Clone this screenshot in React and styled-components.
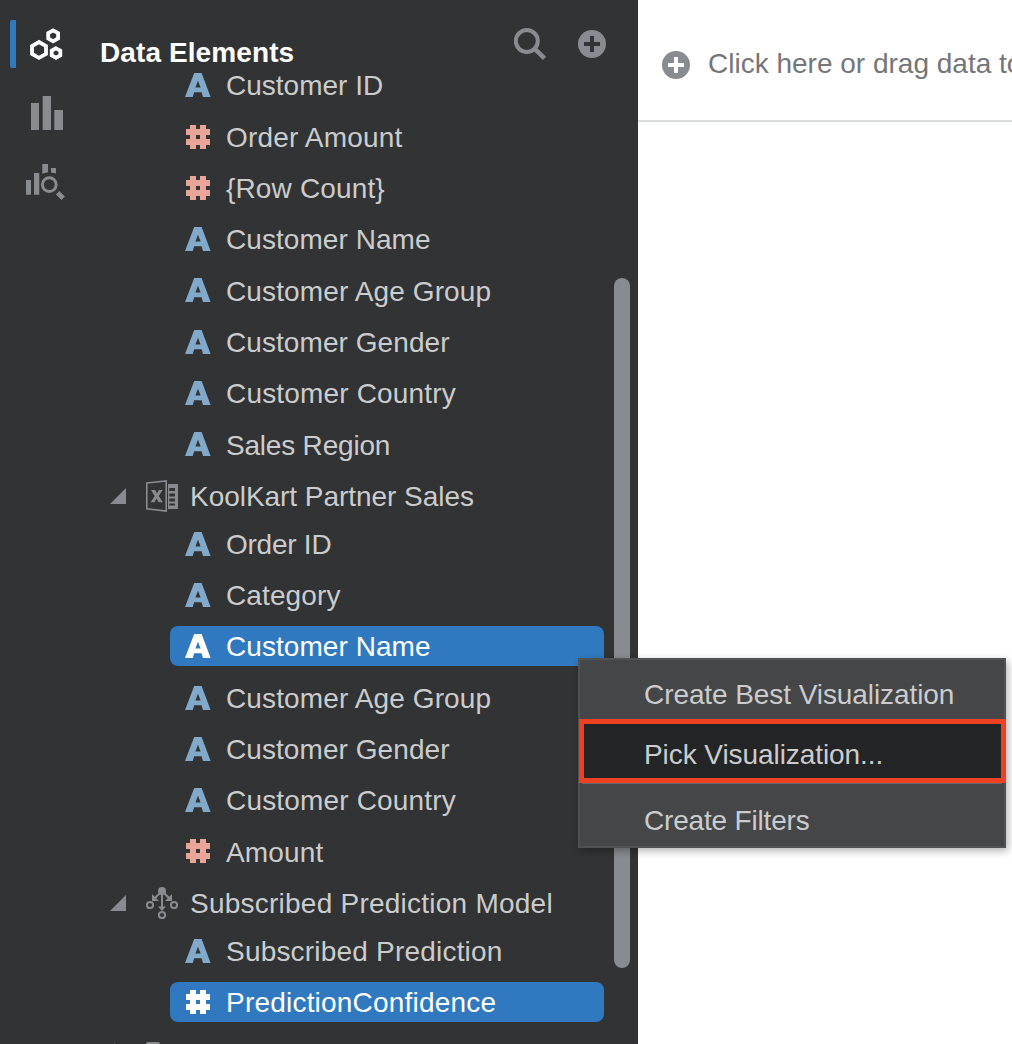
import React from 'react';
import styled, { createGlobalStyle, css } from 'styled-components';

const Global = createGlobalStyle`
  *, *::before, *::after { box-sizing: border-box; }
  html, body { margin: 0; padding: 0; overflow: hidden; }
`;

const Page = styled.div`
  display: flex;
  position: relative;
  width: 1012px;
  height: 1044px;
  overflow: hidden;
  background: #fff;
  font-family: 'Liberation Sans', Arial, sans-serif;
  font-size: 28px;
  white-space: nowrap;
`;

const Rail = styled.nav`
  display: flex;
  flex-direction: column;
  gap: 21px;
  flex: 0 0 90px;
  padding: 20px 0 0 10px;
  background: #323334;
`;

const RailButton = styled.button`
  display: flex;
  align-items: center;
  height: 48px;
  width: 80px;
  padding: 0 0 0 9px;
  border: 0;
  border-left: 6px solid ${p => (p.$active ? '#3079c0' : 'transparent')};
  border-radius: 2px 0 0 2px;
  background: none;
  color: ${p => (p.$active ? '#fff' : '#888b90')};
`;

const Panel = styled.section`
  display: flex;
  flex-direction: column;
  flex: 0 0 548px;
  background: #323334;
  overflow: hidden;
`;

const PanelHeader = styled.header`
  display: flex;
  align-items: flex-start;
  flex: none;
  height: 59.6px;
  padding: 0 32px 0 10px;
`;

const Title = styled.h1`
  flex: 1;
  margin: 37px 0 0;
  font-size: 28px;
  line-height: 32px;
  font-weight: 700;
  letter-spacing: 0.1px;
  color: #fff;
`;

const HeaderTools = styled.div`
  display: flex;
  align-items: center;
  gap: 30px;
  padding-top: 27px;
  color: #888b90;
`;

const PanelBody = styled.div`
  display: flex;
  justify-content: space-between;
  flex: 1;
  min-height: 0;
  padding-right: 8px;
`;

const Tree = styled.div`
  width: 514px;
`;

const Row = styled.div`
  display: flex;
  align-items: center;
  height: 51.3px;
  padding-left: 80px;
`;

const Item = styled.div`
  display: flex;
  align-items: center;
  gap: 15px;
  width: 434px;
  height: 40px;
  padding-left: 15px;
  border-radius: 8px;
  background: ${p => (p.$selected ? '#3079c0' : 'transparent')};
  color: ${p => (p.$selected ? '#fff' : '#cbcccd')};
`;

const GroupRow = styled.div`
  display: flex;
  align-items: center;
  height: 48px;
  padding: 3.4px 0 0 20px;
  color: #cbcccd;
`;

const GroupIcon = styled.span`
  display: flex;
  width: 32px;
  margin: 0 12px 0 20px;
`;

const Label = styled.span`
  line-height: 32px;
  letter-spacing: ${p => p.$ls || 0}px;
`;

const TreeLabel = styled(Label)`
  padding-top: ${p => (p.$low ? 4.4 : 2.4)}px;
`;

const ScrollThumb = styled.div`
  width: 16px;
  height: 690px;
  margin-top: 218.4px;
  border-radius: 8px;
  background: #888b8f;
`;

const Canvas = styled.main`
  flex: 1;
  min-width: 0;
  overflow: hidden;
`;

const DropBar = styled.div`
  display: flex;
  align-items: center;
  gap: 18px;
  height: 122px;
  padding: 10px 0 0 24px;
  border-bottom: 2px solid #d8dcdf;
  color: #757677;
`;

const DropLabel = styled(Label)`
  padding-bottom: 2px;
`;

const Menu = styled.div`
  position: absolute;
  left: 578px;
  top: 658px;
  width: 428px;
  height: 190px;
  border: 2px solid #505254;
  background: #454647;
  box-shadow: 2px 3px 8px rgba(0, 0, 0, 0.3);
  color: #cbcccd;
`;

const MenuItem = styled.div`
  display: flex;
  align-items: center;
  height: 60px;
  padding: 9px 0 0 64px;
  ${p => p.$highlighted && css`
    height: 64px;
    margin: -1px -2px 0 -1px;
    padding: 8px 0 0 60px;
    border: 5px solid #ee4023;
    background: #242527;
  `}
  ${p => p.$separated && css`
    margin: 0 2px;
    padding: 15px 0 0 62px;
    border-top: 1px solid #66686a;
  `}
`;

const IconSvg = styled.svg`
  display: block;
  flex: none;
  fill: ${p => p.$fill || 'currentColor'};
`;

const TextIcon = ({ color }) => (
  <IconSvg width="26" height="24" viewBox="0 0 26 24" $fill={color}>
    <path fillRule="evenodd" d="M9.2 0H16.6L25.6 24H18L16.6 19.3H9.2L7.7 24H0ZM13 7.8L10.4 14.4H15.6Z" />
  </IconSvg>
);

const NumberIcon = ({ color }) => (
  <IconSvg width="26" height="24" viewBox="0 0 26 24" $fill={color}>
    <path fillRule="evenodd" d="M5 0H11V4H15V0H21V4H25V10H21V14H25V20H21V24H15V20H11V24H5V20H1V14H5V10H1V4H5ZM11 10V14H15V10Z" />
  </IconSvg>
);

const PlusIcon = ({ plus }) => (
  <IconSvg width="28" height="28" viewBox="0 0 28 28" $fill="#888b90">
    <circle cx="14" cy="14" r="14" />
    <path d="M12 6H16V12H22V16H16V22H12V16H6V12H12Z" fill={plus} />
  </IconSvg>
);

const SearchIcon = () => (
  <IconSvg width="34" height="34" viewBox="0 0 34 34" $fill="none" stroke="currentColor" strokeWidth="4">
    <circle cx="12.8" cy="14" r="11" />
    <path d="M20.5 21.7L30.5 31.4" strokeWidth="4.6" />
  </IconSvg>
);

const HexGlyph = styled(IconSvg)`
  margin-left: 4px;
`;

const HexIcon = () => (
  <HexGlyph width="34" height="34" viewBox="0 0 34 34" $fill="none" stroke="currentColor" strokeWidth="3.8">
    <path d="M10 15L17 19V26.8L10 30.8L3 26.8V19Z" />
    <path d="M24.1 3.4L29.1 6.2V11.5L24.1 14.3L19.2 11.5V6.2Z" />
    <path d="M27 21.3L31.3 23.7V28.3L27 30.7L22.7 28.3V23.7Z" />
  </HexGlyph>
);

const BarsIcon = () => (
  <IconSvg width="40" height="34" viewBox="0 0 40 34">
    <path d="M6 7H14V34H6ZM17.7 0H26V34H17.7ZM29.3 14H38V34H29.3Z" />
  </IconSvg>
);

const InsightIcon = () => (
  <IconSvg width="42" height="38" viewBox="0 0 42 38">
    <path d="M1 17H6V31.7H1ZM9 10H14.3V31.7H9ZM17.3 1H23V9.3L17.3 10.7ZM26 5H31V10.6L26 9.6Z" />
    <circle cx="24.3" cy="21.6" r="6.9" fill="none" stroke="currentColor" strokeWidth="3" />
    <path d="M32.6 29.8L38.2 35.2" stroke="currentColor" strokeWidth="4.8" />
  </IconSvg>
);

const Expander = () => (
  <IconSvg width="16" height="16" viewBox="0 0 16 16" $fill="#888b90">
    <path d="M16 0V16H0Z" />
  </IconSvg>
);

const Collapsed = () => (
  <IconSvg width="16" height="21" viewBox="0 0 16 21" $fill="#888b90">
    <path d="M4 0L14 10.5L4 21Z" />
  </IconSvg>
);

const WorkbookIcon = () => (
  <IconSvg width="32" height="32" viewBox="0 0 32 32" $fill="#888b90">
    <path d="M.8 3L20.2 .9V31.1L.8 28.8Z" fill="none" stroke="#888b90" strokeWidth="1.6" />
    <path d="M5 10H9.2L11 13.5L12.8 10H16.5L12.8 16L16.7 22.3H12.5L10.6 18.6L8.5 22.3H4.7L8.7 16Z" />
    <path fillRule="evenodd" d="M22 4H32V29H22ZM23.3 8V11H29V8ZM23.3 13.5V16.5H29V13.5ZM23.3 18.5V21.5H29V18.5ZM23.3 23.5V25.5H29V23.5Z" />
  </IconSvg>
);

const ModelIcon = () => (
  <IconSvg width="32" height="32" viewBox="0 0 32 32" $fill="#888b90">
    <circle cx="16" cy="4" r="4" />
    <g fill="none" stroke="#888b90" strokeWidth="2">
      <circle cx="4" cy="18" r="3.1" />
      <circle cx="28" cy="18" r="3.1" />
      <circle cx="16" cy="28" r="3.1" />
      <path d="M14 6L9 11M18 6L23 11M16 7V22" />
    </g>
    <path d="M6 7V14H13ZM26 7V14H19ZM12 19.5H20L16 24Z" />
  </IconSvg>
);

const FolderIcon = () => (
  <IconSvg width="32" height="23" viewBox="0 0 32 23" $fill="#888b90">
    <path d="M0 2Q0 0 2 0H12Q14 0 14 2L15 4H32V23H0Z" />
  </IconSvg>
);

const groupIcons = { workbook: WorkbookIcon, model: ModelIcon, folder: FolderIcon };

const tree = [
  { type: 'text', label: 'Customer ID' },
  { type: 'number', label: 'Order Amount', ls: 0.17 },
  { type: 'number', label: '{Row Count}', ls: 0.15 },
  { type: 'text', label: 'Customer Name', ls: 0.06 },
  { type: 'text', label: 'Customer Age Group', ls: 0.12 },
  { type: 'text', label: 'Customer Gender', ls: 0.07 },
  { type: 'text', label: 'Customer Country', ls: 0.17 },
  { type: 'text', label: 'Sales Region', ls: -0.2 },
  { group: 'workbook', label: 'KoolKart Partner Sales', ls: -0.04 },
  { type: 'text', label: 'Order ID', ls: -0.25 },
  { type: 'text', label: 'Category', ls: 0.12 },
  { type: 'text', label: 'Customer Name', ls: 0.06, selected: true },
  { type: 'text', label: 'Customer Age Group', ls: 0.12 },
  { type: 'text', label: 'Customer Gender', ls: 0.07 },
  { type: 'text', label: 'Customer Country', ls: 0.17 },
  { type: 'number', label: 'Amount', ls: 0.15 },
  { group: 'model', label: 'Subscribed Prediction Model', ls: 0.24 },
  { type: 'text', label: 'Subscribed Prediction', ls: 0.2 },
  { type: 'number', label: 'PredictionConfidence', ls: 0.21, selected: true },
  { group: 'folder', label: 'My Calculations', collapsed: true },
];

function TreeNode({ node }) {
  if (node.group) {
    const Icon = groupIcons[node.group];
    return (
      <GroupRow>
        {node.collapsed ? <Collapsed /> : <Expander />}
        <GroupIcon><Icon /></GroupIcon>
        <TreeLabel $ls={node.ls} $low={node.collapsed}>{node.label}</TreeLabel>
      </GroupRow>
    );
  }
  const Icon = node.type === 'number' ? NumberIcon : TextIcon;
  const color = node.selected ? '#fff' : node.type === 'number' ? '#e8a598' : '#82a9ca';
  return (
    <Row>
      <Item $selected={node.selected}>
        <Icon color={color} />
        <TreeLabel $ls={node.ls}>{node.label}</TreeLabel>
      </Item>
    </Row>
  );
}

export default function App() {
  return (
    <>
      <Global />
      <Page>
        <Rail>
          <RailButton $active><HexIcon /></RailButton>
          <RailButton><BarsIcon /></RailButton>
          <RailButton><InsightIcon /></RailButton>
        </Rail>
        <Panel>
          <PanelHeader>
            <Title>Data Elements</Title>
            <HeaderTools>
              <SearchIcon />
              <PlusIcon plus="#323334" />
            </HeaderTools>
          </PanelHeader>
          <PanelBody>
            <Tree>
              {tree.map((node, i) => <TreeNode key={i} node={node} />)}
            </Tree>
            <ScrollThumb />
          </PanelBody>
        </Panel>
        <Canvas>
          <DropBar>
            <PlusIcon plus="#fff" />
            <DropLabel>Click here or drag data to visualize</DropLabel>
          </DropBar>
        </Canvas>
        <Menu>
          <MenuItem><Label $ls={-0.08}>Create Best Visualization</Label></MenuItem>
          <MenuItem $highlighted><Label $ls={-0.07}>Pick Visualization...</Label></MenuItem>
          <MenuItem $separated><Label $ls={-0.18}>Create Filters</Label></MenuItem>
        </Menu>
      </Page>
    </>
  );
}
